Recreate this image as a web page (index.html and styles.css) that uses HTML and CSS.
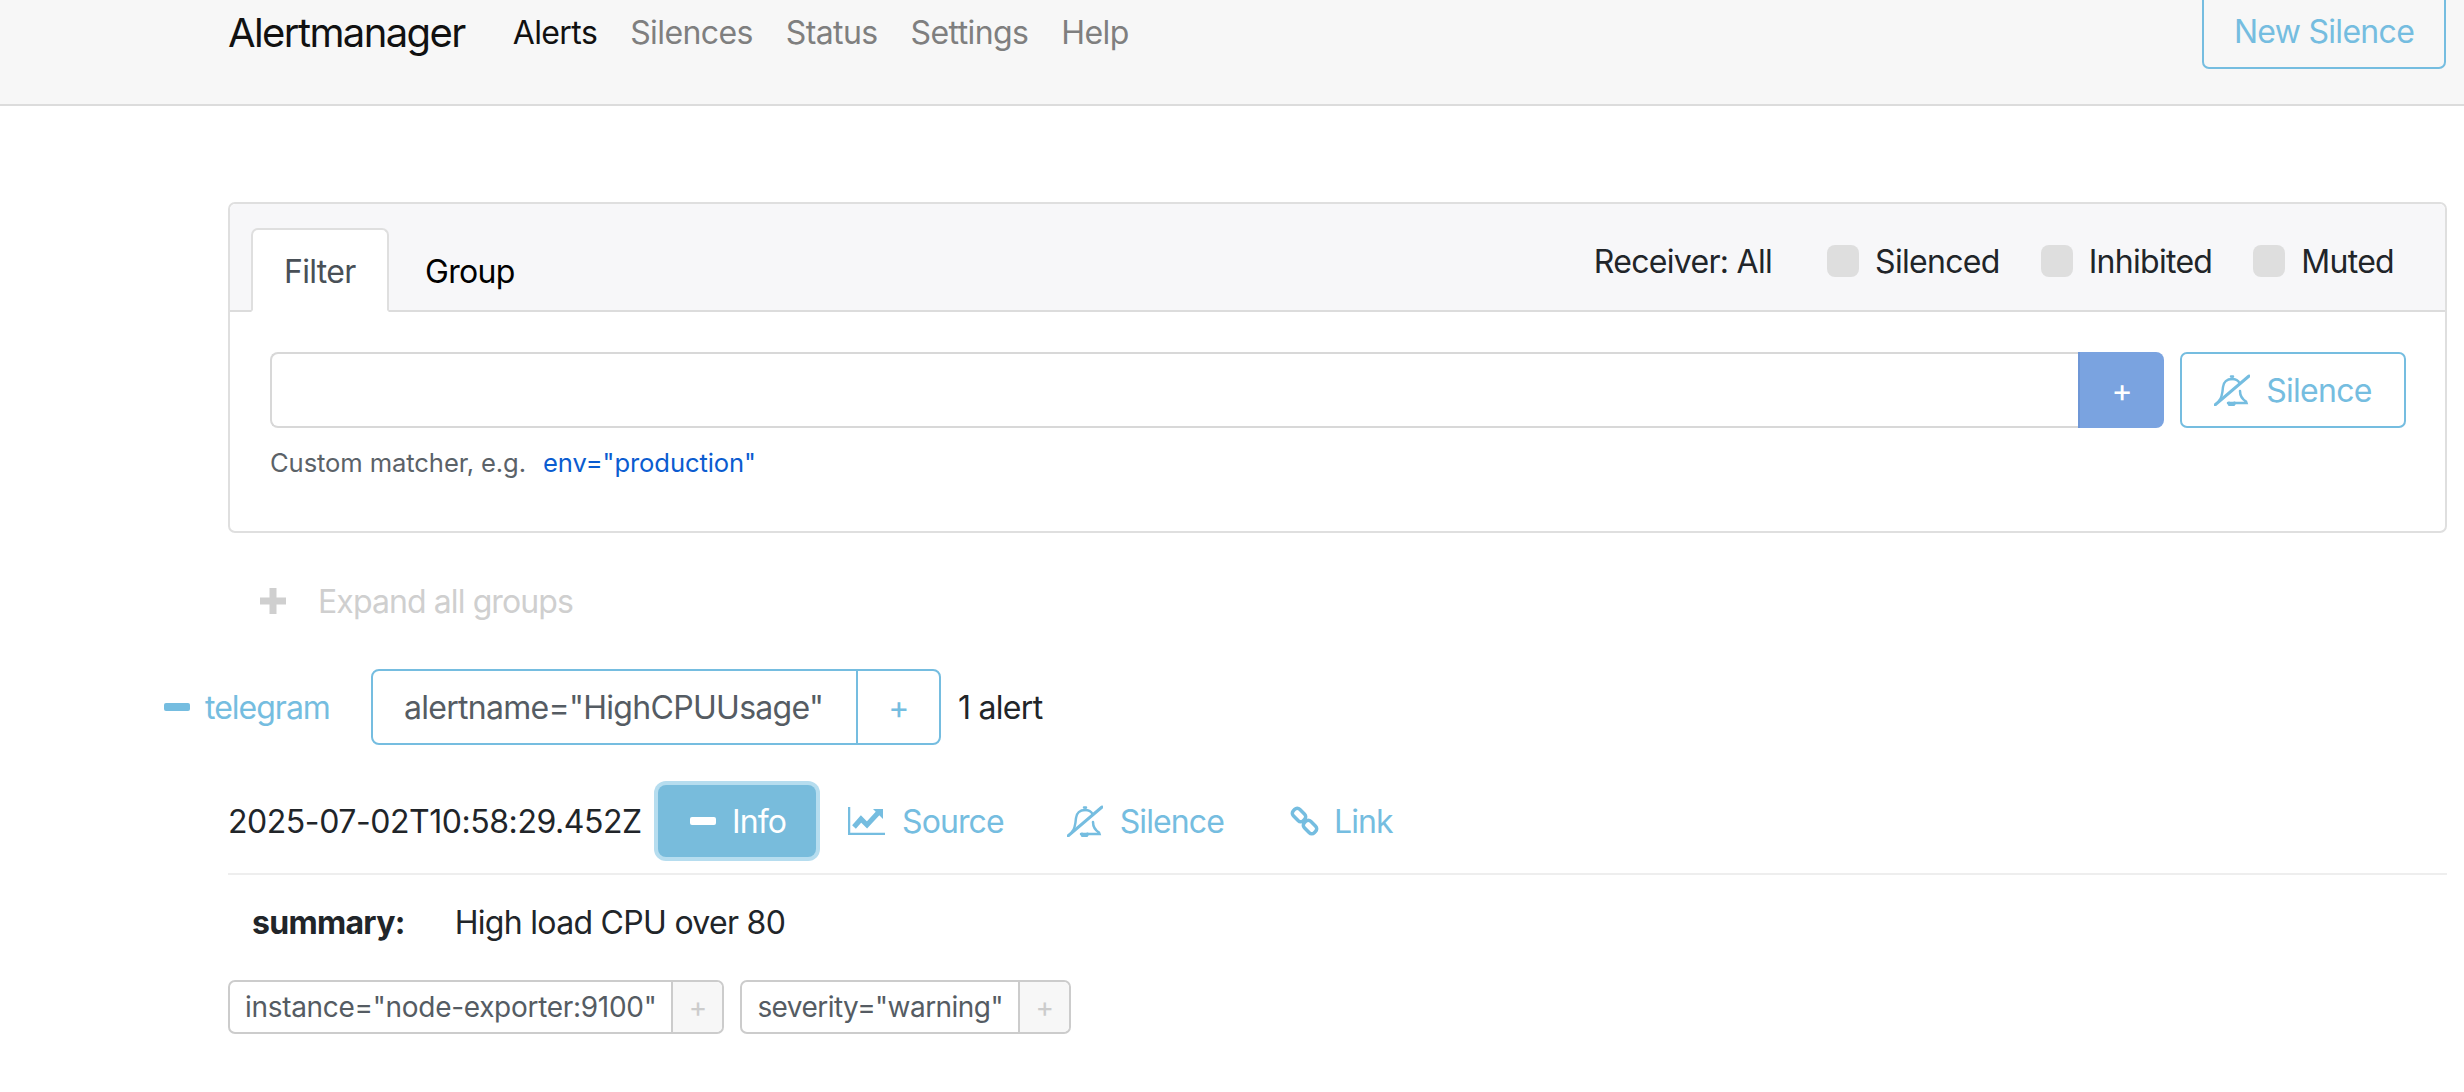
FILE: index.html
```html
<!DOCTYPE html>
<html>
<head>
    <title>Alertmanager</title>
    <link rel="stylesheet" href="styles.css">
</head>
<body>
    <nav class="navbar">
        <a class="brand">Alertmanager</a>
        <ul class="nav-links">
            <li class="active">Alerts</li>
            <li>Silences</li>
            <li>Status</li>
            <li>Settings</li>
            <li>Help</li>
        </ul>
        <a class="btn btn-outline new-silence">New Silence</a>
    </nav>

    <main class="content">
        <section class="card">
            <div class="card-header">
                <div class="tabs">
                    <a class="tab tab-active">Filter</a>
                    <a class="tab">Group</a>
                </div>
                <div class="filters">
                    <span class="receiver">Receiver: All</span>
                    <label class="check"><span class="check-box"></span>Silenced</label>
                    <label class="check"><span class="check-box"></span>Inhibited</label>
                    <label class="check"><span class="check-box"></span>Muted</label>
                </div>
            </div>
            <div class="card-body">
                <div class="filter-row">
                    <input class="filter-input" type="text">
                    <button class="add-btn">+</button>
                    <a class="btn btn-outline silence-btn">
                        <svg class="icon-bell" viewBox="0 0 36 32"><use href="#bell-slash"></use></svg>
                        Silence
                    </a>
                </div>
                <p class="helper">Custom matcher, e.g.<a class="example">env="production"</a></p>
            </div>
        </section>

        <div class="expand-all">
            <svg class="icon-plus" viewBox="0 0 26 26"><path d="M13 0v26M0 13h26"></path></svg>
            <span>Expand all groups</span>
        </div>

        <div class="group-row">
            <span class="icon-minus"></span>
            <a class="receiver-link">telegram</a>
            <div class="group-label">
                <span class="group-label-text">alertname="HighCPUUsage"</span>
                <span class="group-label-add">+</span>
            </div>
            <span class="alert-count">1 alert</span>
        </div>

        <div class="alert">
            <div class="alert-row">
                <span class="alert-time">2025-07-02T10:58:29.452Z</span>
                <a class="info-btn"><span class="icon-minus icon-minus-white"></span>Info</a>
                <a class="alert-link link-source">
                    <svg class="icon-chart" viewBox="0 0 37 28">
                        <path class="thin" d="M1 0v27h36"></path>
                        <path d="M6 20l7-8 6 6 11-12"></path>
                        <path class="fill" d="M25 2h10v10z"></path>
                    </svg>
                    Source
                </a>
                <a class="alert-link link-silence">
                    <svg class="icon-bell" viewBox="0 0 36 32"><use href="#bell-slash"></use></svg>
                    Silence
                </a>
                <a class="alert-link link-link">
                    <svg class="icon-link" viewBox="0 0 31 32">
                        <rect x="-4.500" y="-7" width="9" height="14" rx="3.500" transform="translate(10 10) rotate(-45)"></rect>
                        <rect x="-4.500" y="-7" width="9" height="14" rx="3.500" transform="translate(21 22) rotate(-45)"></rect>
                    </svg>
                    Link
                </a>
            </div>
            <div class="annotation">
                <strong>summary:</strong>
                <span>High load CPU over 80</span>
            </div>
            <div class="labels">
                <div class="label">
                    <span class="label-text">instance="node-exporter:9100"</span>
                    <span class="label-add">+</span>
                </div>
                <div class="label label-tight">
                    <span class="label-text">severity="warning"</span>
                    <span class="label-add">+</span>
                </div>
            </div>
        </div>
    </main>

    <svg class="defs" width="0" height="0">
        <symbol id="bell-slash" viewBox="0 0 36 32">
            <g fill="none" stroke="currentColor" stroke-linecap="round">
                <path stroke-width="3" d="M1 31L35 2"></path>
                <path stroke-width="2.500" d="M18 5c-5 0-8.500 3-9 8-.5 6-1 11-4 14"></path>
                <path stroke-width="2.500" d="M18 5c3 0 6 1 7.500 4M17 2.500h2M26 17c0 5 2 8 6 10.500l.5 1.500H14"></path>
                <path stroke-width="3" d="M15 29c0 1.500 1 2.300 2.500 2.300s2.700-.8 3-2.300"></path>
            </g>
        </symbol>
    </svg>
</body>
</html>
```

FILE: styles.css
```css
* {
    box-sizing: border-box;
}
html, body {
    margin: 0;
    height: 1092px;
    overflow: hidden;
}
body {
    font-family: Inter, "Liberation Sans", sans-serif;
    font-size: 32px;
    letter-spacing: -0.7px;
    color: #212529;
    background: #fff;
}

/* top bar */
.navbar {
    display: flex;
    align-items: flex-start;
    height: 106px;
    padding: 0 18px 0 228px;
    background: #f7f7f7;
    border-bottom: 2px solid #dcdcdc;
}
.brand {
    font-size: 40px;
    line-height: 44px;
    margin-top: 11px;
    letter-spacing: -1.6px;
    color: #111;
}
.nav-links {
    display: flex;
    gap: 33px;
    list-style: none;
    margin: 13px 0 0 48px;
    padding: 0;
    line-height: 40px;
    letter-spacing: -0.6px;
    color: #7f7f7f;
}
.nav-links .active {
    color: #111;
}
.btn {
    display: flex;
    align-items: center;
    justify-content: center;
    height: 76px;
    border: 2px solid #75bde0;
    border-radius: 7px;
    color: #75bde0;
    background: transparent;
}
.new-silence {
    width: 244px;
    margin: -7px 0 0 auto;
}

/* filter card */
.content {
    padding: 0 17px 0 228px;
}
.card {
    margin-top: 96px;
    height: 331px;
    border: 2px solid #dfdfdf;
    border-radius: 7px;
}
.card-header {
    display: flex;
    justify-content: space-between;
    height: 108px;
    padding: 0 51px 0 21px;
    background: #f7f7f9;
    border-bottom: 2px solid #dcdcdc;
    border-radius: 6px 6px 0 0;
}
.tabs {
    display: flex;
    align-items: flex-end;
    margin-bottom: -2px;
}
.tab {
    height: 84px;
    padding: 0 32px;
    line-height: 84px;
    color: #000;
    border: 2px solid transparent;
    border-radius: 7px 7px 0 0;
}
.tab-active {
    width: 138px;
    margin-right: 2px;
    padding: 0 31px;
    color: #495057;
    background: #fff;
    border-color: #dfdfdf #dfdfdf #fff;
}
.filters {
    display: flex;
    align-items: center;
    height: 90px;
    margin-top: 12px;
    color: #212529;
}
.receiver {
    margin-right: 55px;
}
.check {
    display: flex;
    align-items: center;
    margin-left: 41px;
}
.receiver + .check {
    margin-left: 0;
}
.check-box {
    width: 32px;
    height: 32px;
    margin-right: 16px;
    background: #dedede;
    border-radius: 8px;
}
.card-body {
    padding: 40px 39px 0 40px;
}
.filter-row {
    display: flex;
    align-items: stretch;
    height: 76px;
}
.filter-input {
    flex: 1;
    min-width: 0;
    border: 2px solid #d8d8d8;
    border-right: 0;
    border-radius: 8px 0 0 8px;
    background: #fff;
}
.add-btn {
    width: 86px;
    padding: 0;
    font: inherit;
    color: #fff;
    background: #7aa3e0;
    border: 0;
    border-left: 2px solid #6f97d6;
    border-radius: 0 8px 8px 0;
}
.silence-btn {
    width: 226px;
    margin-left: 16px;
    gap: 16px;
}
.helper {
    margin: 20px 0 0;
    font-size: 25.600px;
    line-height: 30px;
    letter-spacing: -0.1px;
    color: #5b6268;
}
.example {
    margin-left: 17px;
    color: #0b5cd0;
}

/* expand all */
.expand-all {
    display: flex;
    align-items: center;
    height: 40px;
    margin: 48px 0 0 32px;
    letter-spacing: -0.9px;
    color: #cfcfcf;
}
.icon-plus {
    width: 26px;
    height: 26px;
    margin-right: 32px;
    fill: none;
    stroke: #cfcfcf;
    stroke-width: 7;
}

/* group header */
.group-row {
    display: flex;
    align-items: center;
    height: 76px;
    margin: 48px 0 0 -64px;
}
.icon-minus {
    width: 26px;
    height: 8px;
    background: #75bde0;
    border-radius: 2px;
}
.receiver-link {
    margin-left: 15px;
    letter-spacing: -1px;
    color: #75bde0;
}
.group-label {
    display: flex;
    align-items: stretch;
    height: 76px;
    margin-left: 41px;
    border: 2px solid #75bde0;
    border-radius: 8px;
}
.group-label-text {
    display: flex;
    align-items: center;
    width: 485px;
    padding-left: 31px;
    color: #555c63;
    border-right: 2px solid #75bde0;
}
.group-label-add {
    display: flex;
    align-items: center;
    justify-content: center;
    width: 81px;
    color: #75bde0;
}
.alert-count {
    margin-left: 17px;
}

/* alert */
.alert-row {
    display: flex;
    align-items: center;
    height: 72px;
    margin-top: 40px;
}
.alert-time {
    width: 422px;
    letter-spacing: -0.45px;
}
.info-btn {
    display: flex;
    align-items: center;
    width: 158px;
    height: 72px;
    margin-left: 8px;
    padding-left: 32px;
    letter-spacing: -0.9px;
    color: #fff;
    background: #78bcdc;
    border-radius: 8px;
    box-shadow: 0 0 0 4px #b6ddef;
}
.icon-minus-white {
    margin-right: 16px;
    background: #fff;
}
.alert-link {
    display: flex;
    align-items: center;
    letter-spacing: -0.9px;
    color: #75bde0;
}
.link-source {
    margin-left: 32px;
    gap: 17px;
}
.link-silence {
    margin-left: 63px;
    gap: 17px;
}
.link-link {
    margin-left: 65px;
    gap: 14px;
}
.icon-bell {
    width: 36px;
    height: 32px;
}
.icon-chart {
    width: 37px;
    height: 28px;
    fill: none;
    stroke: #75bde0;
    stroke-width: 5;
}
.icon-chart .thin {
    stroke-width: 2.500;
}
.icon-chart .fill {
    fill: #75bde0;
    stroke: none;
}
.icon-link {
    width: 31px;
    height: 32px;
    fill: none;
    stroke: #75bde0;
    stroke-width: 3.500;
}
.annotation {
    display: flex;
    gap: 50px;
    margin-top: 16px;
    padding: 28px 0 0 24px;
    line-height: 40px;
    border-top: 2px solid #eee;
}
.annotation strong {
    font-weight: 700;
}
.labels {
    display: flex;
    gap: 16px;
    margin-top: 27px;
}
.label {
    display: flex;
    align-items: stretch;
    height: 54px;
    margin-top: 10px;
    font-size: 28px;
    letter-spacing: -0.3px;
    color: #555c63;
    border: 2px solid #ccc;
    border-radius: 7px;
}
.label-tight {
    letter-spacing: -0.55px;
}
.label-text {
    display: flex;
    align-items: center;
    padding: 0 15px;
    border-right: 2px solid #ccc;
}
.label-add {
    display: flex;
    align-items: center;
    justify-content: center;
    width: 49px;
    color: #ccc;
    background: #f7f7f7;
    border-radius: 0 6px 6px 0;
}
.defs {
    position: absolute;
}
```
